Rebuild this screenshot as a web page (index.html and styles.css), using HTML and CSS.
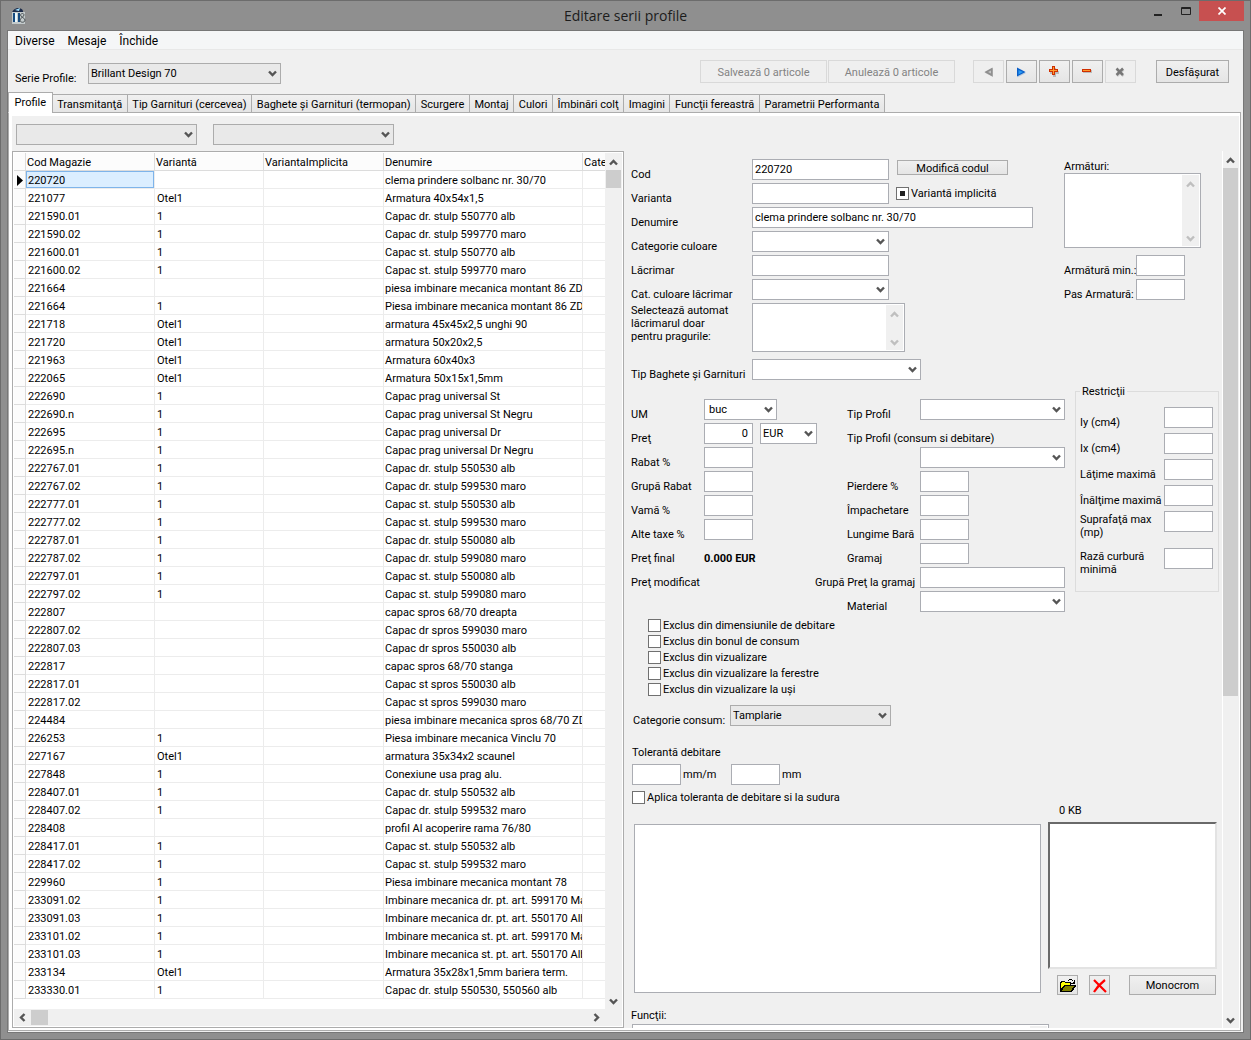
FILE: index.html
```html
<!DOCTYPE html>
<html lang="ro">
<head>
<meta charset="utf-8">
<title>Editare serii profile</title>
<link rel="stylesheet" href="styles.css">
</head>
<body>
<svg width="0" height="0" class="sprite" aria-hidden="true">
  <symbol id="up" viewBox="0 0 9 8"><path d="M1 6.5 4.5 3 8 6.5" fill="none" stroke="currentColor" stroke-width="2.4"/></symbol>
  <symbol id="down" viewBox="0 0 9 8"><path d="M1 1.500 4.500 5 8 1.500" fill="none" stroke="currentColor" stroke-width="2.4"/></symbol>
  <symbol id="left" viewBox="0 0 8 9"><path d="M6.500 1 3 4.500 6.500 8" fill="none" stroke="currentColor" stroke-width="2.4"/></symbol>
  <symbol id="right" viewBox="0 0 8 9"><path d="M1.500 1 5 4.500 1.500 8" fill="none" stroke="currentColor" stroke-width="2.4"/></symbol>
</svg>
<div class="window">
  <header class="titlebar">
    <svg class="app-icon" width="15" height="17" viewBox="0 0 15 17" aria-hidden="true">
      <path d="M0 6C1 1 9-1 11 4V6Z" fill="#1d2c4a"/><path d="M3 3 8 1 7 4Z" fill="#9fe0ff"/>
      <path d="M0 5H13V17H0Z" fill="#c3cacb"/><path d="M1 6H3V15H1ZM6 6H8V15H6Z" fill="#154a80"/><path d="M3 6H5V15H3Z" fill="#e8f8ff"/>
      <path d="M8.500 8C9 6 12 6 12 8 12 10 8 11 8 13 8 16 13 16 13 13 13 11 8.500 10 8.500 8Z" fill="none" stroke="#4a5154"/>
    </svg>
    <h1>Editare serii profile</h1>
    <div class="caption-buttons">
      <button class="cap" aria-label="Minimizare"><svg width="9" height="11" viewBox="0 0 9 11"><path d="M0 8h8v2H0z" fill="#222"/></svg></button>
      <button class="cap" aria-label="Maximizare"><svg width="10" height="8" viewBox="0 0 10 8"><path d="M.5.500h9v7h-9zM0 1.500h10" fill="none" stroke="#222"/></svg></button>
      <button class="cap close" aria-label="Închidere"><svg width="8" height="8" viewBox="0 0 8 8"><path d="M.5.500 7.500 7.500M7.500.500.500 7.500" stroke="#fff" stroke-width="1.700"/></svg></button>
    </div>
  </header>

  <main class="client">
    <nav class="menubar"><a href="#">Diverse</a><a href="#">Mesaje</a><a href="#">Închide</a></nav>

    <div class="toolbar">
      <label for="serie">Serie Profile:</label>
      <select id="serie" class="flat serie"><option>Brillant Design 70</option></select>
      <div class="actions">
        <button class="btn" disabled>Salvează 0 articole</button>
        <button class="btn" disabled>Anulează 0 articole</button>
      </div>
      <div class="navigator">
        <button class="btn" disabled aria-label="Anterior"><svg width="12" height="12" viewBox="0 0 12 12"><path d="M10 2v9L1.500 6.500z" fill="#bbb"/><path d="M9.500 1.500v9L1.500 6z" fill="#8f8f8f"/><path d="M8 4.500v3L5 6z" fill="#c4c4c4"/></svg></button>
        <button class="btn" aria-label="Următor"><svg width="12" height="12" viewBox="0 0 12 12"><path d="M1.500 2.500v9L10 7z" fill="#bcd"/><path d="M1 1.500v9L9.500 6z" fill="#0a5fc8"/><path d="M2.500 4v4.500L7 6z" fill="#2b9bf5"/></svg></button>
        <button class="btn" aria-label="Adaugă"><svg width="12" height="12" viewBox="0 0 12 12"><path d="M4 2h3v3h3v3H7v3H4V8H1V5h3z" fill="#bbb"/><path d="M3 0h3v3h3v3H6v3H3V6H0V3h3z" fill="#cf2f00"/><path d="M4 1h1v3h3v1H5v3H4V5H1V4h3z" fill="#ff9a2e"/></svg></button>
        <button class="btn" aria-label="Șterge"><svg width="12" height="12" viewBox="0 0 12 12"><path d="M1 4h9v3H1z" fill="#bbb"/><path d="M0 3h9v3H0z" fill="#cf2f00"/><path d="M1 4h7v1H1z" fill="#ff9a2e"/></svg></button>
        <button class="btn" disabled aria-label="Renunță"><svg width="12" height="12" viewBox="0 0 12 12"><path d="M2 3.500 8.500 10M8.500 3.500 2 10" stroke="#ccc" stroke-width="2.500"/><path d="M1.500 2.500 8 9M8 2.500 1.500 9" stroke="#777" stroke-width="2.500"/></svg></button>
      </div>
      <button class="btn expand">Desfăşurat</button>
    </div>

    <div class="tabs" role="tablist">
      <button role="tab" class="tab active" aria-selected="true">Profile</button>
      <button role="tab" class="tab">Transmitanţă</button>
      <button role="tab" class="tab">Tip Garnituri (cercevea)</button>
      <button role="tab" class="tab">Baghete şi Garnituri (termopan)</button>
      <button role="tab" class="tab">Scurgere</button>
      <button role="tab" class="tab">Montaj</button>
      <button role="tab" class="tab">Culori</button>
      <button role="tab" class="tab">Îmbinări colţ</button>
      <button role="tab" class="tab">Imagini</button>
      <button role="tab" class="tab">Funcţii fereastră</button>
      <button role="tab" class="tab">Parametrii Performanta</button>
    </div>

    <section class="page">
      <div class="filters">
        <select class="flat" aria-label="Filtru 1"><option></option></select>
        <select class="flat" aria-label="Filtru 2"><option></option></select>
      </div>
      <div class="split">
        <div class="grid-panel">
          <div class="grid-view">
            <table>
              <colgroup><col class="c-ind"><col class="c-cod"><col class="c-var"><col class="c-imp"><col><col class="c-cat"></colgroup>
              <thead><tr><th></th><th>Cod Magazie</th><th>Variantă</th><th>VariantaImplicita</th><th>Denumire</th><th>Categorie</th></tr></thead>
              <tbody>
<tr><th><svg class="pointer" width="6" height="11" viewBox="0 0 6 11"><path d="M0 0 6 5.500 0 11z"/></svg></th><td class="selected">220720</td><td></td><td></td><td>clema prindere solbanc nr. 30/70</td><td></td></tr>
<tr><th></th><td>221077</td><td>Otel1</td><td></td><td>Armatura 40x54x1,5</td><td></td></tr>
<tr><th></th><td>221590.01</td><td>1</td><td></td><td>Capac dr. stulp 550770 alb</td><td></td></tr>
<tr><th></th><td>221590.02</td><td>1</td><td></td><td>Capac dr. stulp 599770 maro</td><td></td></tr>
<tr><th></th><td>221600.01</td><td>1</td><td></td><td>Capac st. stulp 550770 alb</td><td></td></tr>
<tr><th></th><td>221600.02</td><td>1</td><td></td><td>Capac st. stulp 599770 maro</td><td></td></tr>
<tr><th></th><td>221664</td><td></td><td></td><td>piesa imbinare mecanica montant 86 ZDG</td><td></td></tr>
<tr><th></th><td>221664</td><td>1</td><td></td><td>Piesa imbinare mecanica montant 86 ZDG</td><td></td></tr>
<tr><th></th><td>221718</td><td>Otel1</td><td></td><td>armatura 45x45x2,5 unghi 90</td><td></td></tr>
<tr><th></th><td>221720</td><td>Otel1</td><td></td><td>armatura 50x20x2,5</td><td></td></tr>
<tr><th></th><td>221963</td><td>Otel1</td><td></td><td>Armatura 60x40x3</td><td></td></tr>
<tr><th></th><td>222065</td><td>Otel1</td><td></td><td>Armatura 50x15x1,5mm</td><td></td></tr>
<tr><th></th><td>222690</td><td>1</td><td></td><td>Capac prag universal St</td><td></td></tr>
<tr><th></th><td>222690.n</td><td>1</td><td></td><td>Capac prag universal St Negru</td><td></td></tr>
<tr><th></th><td>222695</td><td>1</td><td></td><td>Capac prag universal Dr</td><td></td></tr>
<tr><th></th><td>222695.n</td><td>1</td><td></td><td>Capac prag universal Dr Negru</td><td></td></tr>
<tr><th></th><td>222767.01</td><td>1</td><td></td><td>Capac dr. stulp 550530 alb</td><td></td></tr>
<tr><th></th><td>222767.02</td><td>1</td><td></td><td>Capac dr. stulp 599530 maro</td><td></td></tr>
<tr><th></th><td>222777.01</td><td>1</td><td></td><td>Capac st. stulp 550530 alb</td><td></td></tr>
<tr><th></th><td>222777.02</td><td>1</td><td></td><td>Capac st. stulp 599530 maro</td><td></td></tr>
<tr><th></th><td>222787.01</td><td>1</td><td></td><td>Capac dr. stulp 550080 alb</td><td></td></tr>
<tr><th></th><td>222787.02</td><td>1</td><td></td><td>Capac dr. stulp 599080 maro</td><td></td></tr>
<tr><th></th><td>222797.01</td><td>1</td><td></td><td>Capac st. stulp 550080 alb</td><td></td></tr>
<tr><th></th><td>222797.02</td><td>1</td><td></td><td>Capac st. stulp 599080 maro</td><td></td></tr>
<tr><th></th><td>222807</td><td></td><td></td><td>capac spros 68/70 dreapta</td><td></td></tr>
<tr><th></th><td>222807.02</td><td></td><td></td><td>Capac dr spros 599030 maro</td><td></td></tr>
<tr><th></th><td>222807.03</td><td></td><td></td><td>Capac dr spros 550030 alb</td><td></td></tr>
<tr><th></th><td>222817</td><td></td><td></td><td>capac spros 68/70 stanga</td><td></td></tr>
<tr><th></th><td>222817.01</td><td></td><td></td><td>Capac st spros 550030 alb</td><td></td></tr>
<tr><th></th><td>222817.02</td><td></td><td></td><td>Capac st spros 599030 maro</td><td></td></tr>
<tr><th></th><td>224484</td><td></td><td></td><td>piesa imbinare mecanica spros 68/70 ZDG</td><td></td></tr>
<tr><th></th><td>226253</td><td>1</td><td></td><td>Piesa imbinare mecanica Vinclu 70</td><td></td></tr>
<tr><th></th><td>227167</td><td>Otel1</td><td></td><td>armatura 35x34x2 scaunel</td><td></td></tr>
<tr><th></th><td>227848</td><td>1</td><td></td><td>Conexiune usa prag alu.</td><td></td></tr>
<tr><th></th><td>228407.01</td><td>1</td><td></td><td>Capac dr. stulp 550532 alb</td><td></td></tr>
<tr><th></th><td>228407.02</td><td>1</td><td></td><td>Capac dr. stulp 599532 maro</td><td></td></tr>
<tr><th></th><td>228408</td><td></td><td></td><td>profil Al acoperire rama 76/80</td><td></td></tr>
<tr><th></th><td>228417.01</td><td>1</td><td></td><td>Capac st. stulp 550532 alb</td><td></td></tr>
<tr><th></th><td>228417.02</td><td>1</td><td></td><td>Capac st. stulp 599532 maro</td><td></td></tr>
<tr><th></th><td>229960</td><td>1</td><td></td><td>Piesa imbinare mecanica montant 78</td><td></td></tr>
<tr><th></th><td>233091.02</td><td>1</td><td></td><td>Imbinare mecanica dr. pt. art. 599170 Maro</td><td></td></tr>
<tr><th></th><td>233091.03</td><td>1</td><td></td><td>Imbinare mecanica dr. pt. art. 550170 Alb</td><td></td></tr>
<tr><th></th><td>233101.02</td><td>1</td><td></td><td>Imbinare mecanica st. pt. art. 599170 Maro</td><td></td></tr>
<tr><th></th><td>233101.03</td><td>1</td><td></td><td>Imbinare mecanica st. pt. art. 550170 Alb</td><td></td></tr>
<tr><th></th><td>233134</td><td>Otel1</td><td></td><td>Armatura 35x28x1,5mm bariera term.</td><td></td></tr>
<tr><th></th><td>233330.01</td><td>1</td><td></td><td>Capac dr. stulp 550530, 550560 alb</td><td></td></tr>
              </tbody>
            </table>
          </div>
          <div class="vscroll"><svg width="9" height="8"><use href="#up"/></svg><i class="thumb short"></i><svg width="9" height="8"><use href="#down"/></svg></div>
          <div class="hscroll"><svg width="8" height="9"><use href="#left"/></svg><i class="thumb"></i><svg width="8" height="9"><use href="#right"/></svg></div>
        </div>

        <form class="form">
          <div class="block top">
            <div class="fields">
              <div class="row"><label for="cod">Cod</label><input id="cod" class="w-l" value="220720"><button type="button" class="btn modify">Modifică codul</button></div>
              <div class="row"><label for="varianta">Varianta</label><input id="varianta" class="w-l"><label class="check beside"><input type="checkbox" class="mixed">Variantă implicită</label></div>
              <div class="row"><label for="den">Denumire</label><input id="den" class="w-xl" value="clema prindere solbanc nr. 30/70"></div>
              <div class="row"><label for="catc">Categorie culoare</label><select id="catc" class="w-l"><option></option></select></div>
              <div class="row"><label for="lac">Lăcrimar</label><input id="lac" class="w-l"></div>
              <div class="row"><label for="catl">Cat. culoare lăcrimar</label><select id="catl" class="w-l"><option></option></select></div>
              <div class="row tall"><label for="praguri">Selectează automat<br>lăcrimarul doar<br>pentru pragurile:</label>
                <div class="memo praguri"><textarea id="praguri"></textarea><div class="vscroll off"><svg width="9" height="8"><use href="#up"/></svg><svg width="9" height="8"><use href="#down"/></svg></div></div></div>
              <div class="row"><label for="tbg">Tip Baghete şi Garnituri</label><select id="tbg" class="w-t"><option></option></select></div>
            </div>
            <div class="armaturi">
              <label for="arm">Armături:</label>
              <div class="memo"><textarea id="arm"></textarea><div class="vscroll off"><svg width="9" height="8"><use href="#up"/></svg><svg width="9" height="8"><use href="#down"/></svg></div></div>
              <div class="row"><label for="amin">Armătură min.:</label><input id="amin" class="w-s"></div>
              <div class="row"><label for="apas">Pas Armatură:</label><input id="apas" class="w-s"></div>
            </div>
          </div>

          <div class="block mid">
            <div class="price">
              <div class="row"><label for="um">UM</label><select id="um" class="w-m pad"><option>buc</option></select></div>
              <div class="row"><label for="pret">Preţ</label><input id="pret" class="w-s num" value="0"><select class="w-e" aria-label="Monedă"><option>EUR</option></select></div>
              <div class="row"><label for="rabat">Rabat %</label><input id="rabat" class="w-s"></div>
              <div class="row"><label for="gr">Grupă Rabat</label><input id="gr" class="w-s"></div>
              <div class="row"><label for="vama">Vamă %</label><input id="vama" class="w-s"></div>
              <div class="row"><label for="taxe">Alte taxe %</label><input id="taxe" class="w-s"></div>
              <div class="row"><span class="label">Preţ final</span><output class="total">0.000 EUR</output></div>
              <div class="row"><span class="label">Preţ modificat</span></div>
            </div>
            <div class="type">
              <div class="row"><label for="tp">Tip Profil</label><select id="tp" class="w-p"><option></option></select></div>
              <div class="row wide"><label for="tpc">Tip Profil (consum si debitare)</label></div>
              <div class="row"><span class="label"></span><select id="tpc" class="w-p"><option></option></select></div>
              <div class="row"><label for="pier">Pierdere %</label><input id="pier" class="w-s"></div>
              <div class="row"><label for="imp">Împachetare</label><input id="imp" class="w-s"></div>
              <div class="row"><label for="lung">Lungime Bară</label><input id="lung" class="w-s"></div>
              <div class="row"><label for="gram">Gramaj</label><input id="gram" class="w-s"></div>
              <div class="row outdent"><label for="gpg">Grupă Preţ la gramaj</label><input id="gpg" class="w-p"></div>
              <div class="row"><label for="mat">Material</label><select id="mat" class="w-p"><option></option></select></div>
            </div>
            <fieldset>
              <legend>Restricţii</legend>
              <div class="limit"><label for="iy">Iy (cm4)</label><input id="iy" class="w-s"></div>
              <div class="limit"><label for="ix">Ix (cm4)</label><input id="ix" class="w-s"></div>
              <div class="limit"><label for="latm">Lăţime maximă</label><input id="latm" class="w-s"></div>
              <div class="limit"><label for="inm">Înălţime maximă</label><input id="inm" class="w-s"></div>
              <div class="limit two"><label for="sup">Suprafaţă max<br>(mp)</label><input id="sup" class="w-s"></div>
              <div class="limit two"><label for="raza">Rază curbură<br>minimă</label><input id="raza" class="w-s"></div>
            </fieldset>
          </div>

          <div class="checks">
            <label class="check"><input type="checkbox">Exclus din dimensiunile de debitare</label>
            <label class="check"><input type="checkbox">Exclus din bonul de consum</label>
            <label class="check"><input type="checkbox">Exclus din vizualizare</label>
            <label class="check"><input type="checkbox">Exclus din vizualizare la ferestre</label>
            <label class="check"><input type="checkbox">Exclus din vizualizare la uşi</label>
          </div>

          <div class="row consum"><label for="cc">Categorie consum:</label><select id="cc" class="flat"><option>Tamplarie</option></select></div>

          <div class="tolerance">
            <span>Tolerantă debitare</span>
            <div class="tol-row">
              <div class="unit"><input id="tm" class="w-s"><label for="tm">mm/m</label></div>
              <div class="unit"><input id="tmm" class="w-s"><label for="tmm">mm</label></div>
            </div>
            <label class="check"><input type="checkbox">Aplica toleranta de debitare si la sudura</label>
          </div>

          <div class="media">
            <textarea class="notes" aria-label="Observaţii"></textarea>
            <div class="picture">
              <span class="size">0 KB</span>
              <div class="preview"></div>
              <div class="pic-buttons">
                <button type="button" class="btn icon" aria-label="Deschide"><svg width="16" height="13" viewBox="0 0 16 13" shape-rendering="crispEdges">
                  <path d="M0 3h1V2h4v1h6v3h5v1l-4 6H0z" fill="#000"/><path d="M1 4h1V3h3v1h5v2H4L1 10z" fill="#ff0"/><path d="M5 7h9l-3 5H2z" fill="#808000"/>
                  <path d="M8 1h1V0h3v1H9v1H8zM12 1h1v1h-1zM15 1v4h-4V4h2V3h1V1z" fill="#000"/></svg></button>
                <button type="button" class="btn icon" aria-label="Şterge imaginea"><svg width="14" height="14" viewBox="0 0 14 14"><path d="M1 1 13 13M12 1C8 4 4 8 1 13" fill="none" stroke="#f00" stroke-width="2.200"/></svg></button>
                <button type="button" class="btn mono">Monocrom</button>
              </div>
            </div>
          </div>

          <div class="functions">
            <label for="func">Funcţii:</label>
            <div class="memo"><textarea id="func"></textarea><div class="vscroll off"><svg width="9" height="8"><use href="#up"/></svg><svg width="9" height="8"><use href="#down"/></svg></div></div>
          </div>
        </form>
        <div class="vscroll edge"><svg width="9" height="8"><use href="#up"/></svg><i class="thumb long"></i><svg width="9" height="8"><use href="#down"/></svg></div>
      </div>
    </section>
  </main>
</div>
</body>
</html>
```
FILE: styles.css
```css
* { box-sizing: border-box; }
body {
  margin: 0;
  font: 11px/13px Roboto, "Noto Sans", sans-serif;
  color: #000;
}
button, input, select, textarea { font: inherit; color: inherit; margin: 0; border-radius: 0; }
.sprite { display: block; height: 0; }
svg { display: block; }

/* window frame */
.window {
  height: 100vh;
  display: flex;
  flex-direction: column;
  background: #8f8f8f;
  border: 1px solid #6c6c6c;
  padding: 0 6px 6px;
}
.titlebar { display: grid; grid-template-columns: 1fr auto 1fr; height: 29px; flex: none; align-items: center; }
.titlebar h1 { margin: 0; font: 14px/20px "Open Sans", "Noto Sans", sans-serif; color: #1c1c1c; }
.app-icon { margin-left: 5px; }
.caption-buttons { display: flex; justify-content: flex-end; align-self: start; }
.cap { width: 27px; height: 20px; border: 0; padding: 0; background: none; display: grid; place-items: center; }
.cap.close { width: 45px; background: #c75050; }

.client {
  flex: 1;
  min-height: 0;
  display: flex;
  flex-direction: column;
  background: #f0f0f0;
  border: 1px solid #777;
}
.menubar {
  display: flex;
  gap: 13px;
  height: 19px;
  padding: 0 7px;
  background: #f5f6f7;
  border-bottom: 1px solid #e8e8e8;
  font: 12px/20px Roboto, "Noto Sans", sans-serif;
  flex: none;
}
.menubar a { color: #000; text-decoration: none; }

/* toolbar */
.toolbar { display: flex; height: 42px; padding: 10px 14px 0 7px; align-items: flex-start; flex: none; }
.toolbar label { width: 73px; padding-top: 12px; white-space: nowrap; }
.serie { width: 193px; margin-top: 3px; }
.btn {
  border: 1px solid #acacac;
  background: linear-gradient(#f0f0f0, #e5e5e5);
  padding: 1px 0 0;
  display: grid;
  place-items: center;
  white-space: nowrap;
}
.btn:disabled { border-color: #d9d9d9; background: #efefef; color: #838383; }
.toolbar .btn { height: 23px; }
.actions { display: flex; gap: 1px; margin-left: auto; margin-right: 18px; }
.actions .btn { width: 127px; }
.navigator { display: flex; gap: 2px; margin-right: 20px; }
.navigator .btn { width: 31px; }
.toolbar .expand { width: 73px; }

/* tabs */
.tabs { display: flex; width: 877px; align-items: flex-end; height: 21px; flex: none; margin-bottom: -1px; z-index: 1; }
.tab {
  flex: 1 1 auto;
  height: 19px;
  margin-left: -1px;
  padding: 2px 2px 0;
  border: 1px solid #acacac;
  background: linear-gradient(#f0f0f0, #e5e5e5);
  white-space: nowrap;
}
.tab.active { height: 21px; margin-left: 0; padding: 0 3px 1px; background: #fff; border-bottom-color: #fff; }
.page {
  flex: 1;
  min-height: 0;
  display: flex;
  flex-direction: column;
  margin: 0 2px 1px 0;
  border: 1px solid #acacac;
  box-shadow: inset 0 0 0 3px #fff;
  padding: 3px 1px 2px 3px;
}
.filters { display: flex; gap: 16px; padding: 8px 4px 6px; background: #f0f0f0; flex: none; }
.filters select { width: 181px; }
.split { flex: 1; min-height: 0; display: flex; background: #f0f0f0; }

/* inputs */
input, select, textarea { border: 1px solid #abadb3; background: #fff; outline: 0; }
input, select { height: 21px; padding: 0 2px 1px; flex: none; }
textarea { resize: none; padding: 2px; display: block; }
select {
  appearance: none;
  padding-bottom: 0;
  background: #fff url("data:image/svg+xml,%3Csvg xmlns='http://www.w3.org/2000/svg' width='9' height='8'%3E%3Cpath d='M1 1.500 4.500 5 8 1.500' fill='none' stroke='%23555' stroke-width='2.400'/%3E%3C/svg%3E") no-repeat right 3px center;
}
select.flat { background-color: #e9e9e9; border-color: #acacac; }
input[type="checkbox"] { appearance: none; width: 13px; height: 13px; padding: 0; border: 1px solid #707070; }
input.mixed { background: linear-gradient(#212121, #212121) no-repeat center / 5px 5px #fff; }
.check { display: flex; align-items: center; gap: 2px; height: 13px; line-height: 15px; white-space: nowrap; }
.w-s { width: 49px; }
.w-m { width: 73px; }
.w-e { width: 57px; margin-left: 7px; }
.w-l { width: 137px; }
.w-t { width: 169px; }
.w-p { width: 145px; }
.w-xl { width: 281px; }
select.pad { padding-left: 4px; }
.num { text-align: right; padding-right: 4px; }

/* scrollbars */
.vscroll, .hscroll { background: #f0f0f0; color: #555; display: flex; }
.vscroll { width: 17px; flex-direction: column; align-items: center; padding: 5px 0 3px; }
.vscroll svg:last-child, .hscroll svg:last-child { margin-top: auto; }
.thumb { background: #cdcdcd; flex: none; }
.vscroll .thumb { width: 15px; margin-top: 4px; }
.thumb.short { height: 18px; }
.thumb.long { height: 528px; }
.vscroll.off { color: #bfbfbf; width: 17px; padding-right: 1px; }
.vscroll.edge { border-left: 1px solid #fff; flex: none; padding-right: 1px; }

/* data grid */
.grid-panel {
  flex: 1;
  min-width: 0;
  display: grid;
  grid-template: minmax(0, 1fr) 17px / minmax(0, 1fr) 17px;
  background: #fff;
  border: 1px solid #acacac;
  padding: 1px;
}
.grid-view { overflow: hidden; }
.hscroll { grid-column: 1 / 3; align-items: center; padding: 0 21px 0 4px; }
.hscroll .thumb { width: 17px; height: 15px; margin-left: 5px; }
.hscroll svg:last-child { margin: 0 0 0 auto; }
table { width: 100%; table-layout: fixed; border-collapse: separate; border-spacing: 0; }
.c-ind { width: 12px; }
.c-cod { width: 129px; }
.c-var { width: 109px; }
.c-imp { width: 120px; }
.c-cat { width: 22px; }
th, td {
  height: 18px;
  padding: 2px 0 0 2px;
  border: solid #ececec;
  border-width: 0 1px 1px 0;
  text-align: left;
  font-weight: normal;
  white-space: nowrap;
  overflow: hidden;
}
thead th { background: #fcfcfc; border-color: #dcdcdc; padding-left: 1px; }
tbody th { background: #fcfcfc; border-color: #dcdcdc; }
th:last-child, td:last-child { border-right: 0; }
td:nth-child(5) { padding-left: 1px; }
.selected { background: #dbeeff; box-shadow: inset 0 0 0 1px #7eb4ea; }
.pointer { margin-left: 1px; }

/* property form */
.form { flex: 0 0 598px; overflow: hidden; padding: 8px 0 0 7px; }
.row { display: flex; height: 24px; }
.row > label, .row > .label { align-self: flex-end; padding-bottom: 2px; flex: none; white-space: nowrap; }
.block { display: flex; align-items: flex-start; }
.fields { flex: 1; }
.fields .row > label:first-child { width: 121px; }
.fields .row.tall { height: 56px; }
.row.tall > label { align-self: flex-start; padding-top: 1px; }
.modify { width: 111px; height: 15px; margin: 1px 0 0 8px; }
.row > .check.beside { align-self: flex-start; padding: 0; margin: 4px 0 0 7px; }
.memo { display: flex; background: #fff; border: 1px solid #abadb3; padding: 1px; }
.memo textarea { flex: 1; min-width: 0; border: 0; }
.praguri { width: 153px; height: 49px; }
.armaturi { width: 158px; }
.armaturi > label { display: block; padding-top: 1px; }
.armaturi .memo { width: 137px; height: 75px; margin: 0 0 7px; }
.armaturi .row > label { width: 72px; }

.mid { margin-top: 2px; }
.price { width: 184px; padding-top: 14px; }
.price .row > label, .price .row > .label { width: 73px; }
.price .total { font-weight: bold; align-self: flex-end; padding-bottom: 2px; }
.type { width: 260px; padding-top: 14px; }
.type .row > label, .type .row > .label { width: 105px; padding-left: 32px; }
.type .row.outdent > label { padding-left: 0; }
fieldset { width: 144px; height: 207px; margin: 0; padding: 9px 5px 0 4px; border: 1px solid #dcdcdc; }
legend { padding: 0 2px; }
.limit { display: flex; justify-content: space-between; height: 26px; }
.limit label { margin-top: 9px; width: 82px; white-space: nowrap; }
.limit.two label { margin-top: 2px; }
.limit.two { height: 37px; }

.checks { display: flex; flex-direction: column; gap: 3px; padding: 4px 0 9px 17px; }
.consum > label { width: 99px; padding-left: 2px; }
.consum select { width: 161px; }
.tolerance { padding: 17px 0 0 1px; }
.tol-row { display: flex; gap: 20px; margin: 5px 0 6px; }
.unit { display: flex; align-items: center; gap: 2px; }
.unit:first-child { width: 79px; }
.media { display: flex; gap: 7px; margin: 0 5px 0 3px; }
.notes { flex: 1; height: 169px; margin-top: 20px; }
.picture { width: 169px; }
.size { display: block; padding-left: 11px; }
.preview {
  height: 147px;
  margin-top: 5px;
  background: #fff;
  border: 2px solid;
  border-color: #696969 #e3e3e3 #e3e3e3 #696969;
}
.pic-buttons { display: flex; margin-top: 6px; padding: 0 1px 0 9px; }
.pic-buttons .btn { height: 20px; }
.btn.icon { width: 21px; margin-right: 11px; }
.btn.mono { width: 87px; margin-left: auto; }
.functions { width: 418px; margin-top: 14px; }
.functions .memo { height: 60px; margin: 2px 0 0 1px; }
```
